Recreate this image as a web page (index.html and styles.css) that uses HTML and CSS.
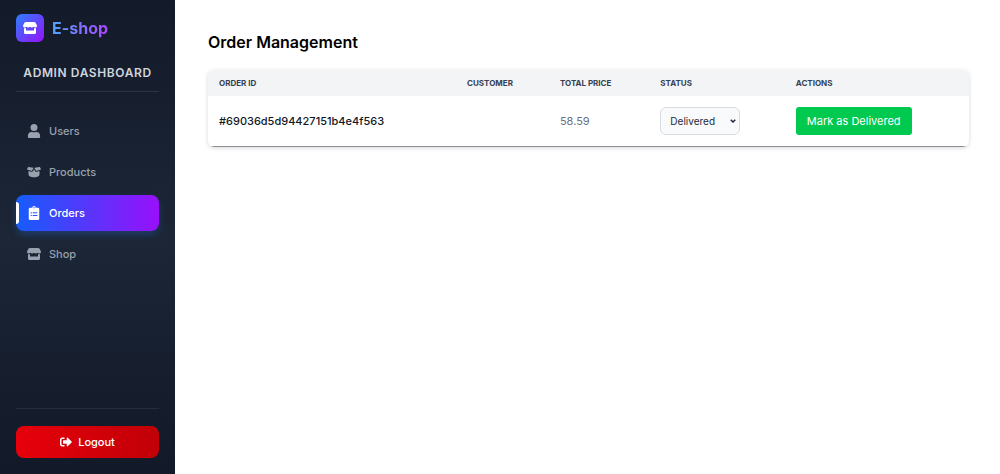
FILE: index.html
```html
<!DOCTYPE html>
<html lang="en">
<head>
<meta charset="utf-8">
<title>Order Management</title>
<link rel="stylesheet" href="styles.css">
</head>
<body>
<svg class="symbols" aria-hidden="true">
  <symbol id="shop" viewBox="0 0 28 24">
    <path d="M5.500 0h17c1 0 1.700.4 2.200 1.200L27.500 6c1.200 2.300-.1 5-2.700 5-1.500 0-2.600-.6-3.400-1.600-.8 1-2.100 1.600-3.700 1.600s-2.900-.6-3.700-1.600c-.8 1-2.100 1.600-3.700 1.600s-2.900-.6-3.700-1.600C5.800 10.400 4.700 11 3.200 11 .6 11-.7 8.300.5 6l2.800-4.800C3.800.4 4.500 0 5.500 0zM2 12.500c1.600.3 3 .2 4-.3V17h16v-4.800c1 .5 2.400.6 4 .3V21c0 1.700-1 3-2.700 3H4.700C3 24 2 22.700 2 21z"/>
  </symbol>
</svg>
<div class="layout">
  <aside class="sidebar">
    <div class="brand">
      <span class="brand-mark"><svg class="brand-icon" aria-hidden="true"><use href="#shop"/></svg></span>
      <span class="brand-name">E-shop</span>
    </div>
    <h2 class="sidebar-title">ADMIN DASHBOARD</h2>
    <nav class="nav">
      <a class="nav-link" href="#users">
        <svg class="nav-icon" viewBox="0 0 448 512" aria-hidden="true"><path d="M224 256a128 128 0 1 0 0-256 128 128 0 0 0 0 256zm90 32h-17c-44 21-102 21-146 0h-17C60 288 0 348 0 422v42c0 26 22 48 48 48h352c26 0 48-22 48-48v-42c0-74-60-134-134-134z"/></svg>
        Users
      </a>
      <a class="nav-link" href="#products">
        <svg class="nav-icon" viewBox="0 0 28 28" aria-hidden="true"><path d="M3 4l9.500 1.500c.5.100.6.500.4 1L10.200 11c-.4.700-1 .900-1.700.700L1 9.700c-.8-.2-1.100-.8-.8-1.500L2 4.600C2.200 4.100 2.500 3.900 3 4zM25 4l-9.500 1.500c-.5.100-.6.500-.4 1l2.700 4.500c.4.700 1 .900 1.700.700l7.500-2c.8-.2 1.100-.8.8-1.500L26 4.600c-.2-.5-.5-.7-1-.6zM14 8.500l2.300 3.800c.8 1.300 2 1.700 3.400 1.300l5.300-1.400V18c0 3.500-1.500 4.700-4 5.300l-5 1.300c-1.300.4-2.700.4-4 0l-5-1.300C4.500 22.700 3 21.500 3 18v-5.800l5.300 1.400c1.400.4 2.600 0 3.400-1.300z"/></svg>
        Products
      </a>
      <a class="nav-link nav-link-active" href="#orders" aria-current="page">
        <svg class="nav-icon" viewBox="0 0 384 512" aria-hidden="true"><path fill-rule="evenodd" d="M336 64h-80a64 64 0 0 0-128 0H48C22 64 0 86 0 112v352c0 26 22 48 48 48h288c26 0 48-22 48-48V112c0-26-22-48-48-48zM192 40a24 24 0 1 1 0 48 24 24 0 0 1 0-48zM72 232h40v40H72zm72 0h168v36H144zM72 328h40v40H72zm72 0h168v36H144z"/></svg>
        Orders
      </a>
      <a class="nav-link" href="#shop-page">
        <svg class="nav-icon" aria-hidden="true"><use href="#shop"/></svg>
        Shop
      </a>
    </nav>
    <div class="sidebar-footer">
      <button class="logout" type="button">
        <svg class="logout-icon" viewBox="0 0 512 512" aria-hidden="true"><path d="M497 273L329 441c-15 15-41 4.500-41-17v-96H152c-13.300 0-24-10.700-24-24v-96c0-13.300 10.700-24 24-24h136V88c0-21.400 25.900-32 41-17l168 168c9.300 9.400 9.300 24.600 0 34zM192 436v-40c0-6.600-5.400-12-12-12H96c-17.700 0-32-14.300-32-32V160c0-17.700 14.300-32 32-32h84c6.600 0 12-5.400 12-12V76c0-6.600-5.400-12-12-12H96c-53 0-96 43-96 96v192c0 53 43 96 96 96h84c6.600 0 12-5.400 12-12z"/></svg>
        Logout
      </button>
    </div>
  </aside>
  <main class="main">
    <h1 class="page-title">Order Management</h1>
    <div class="card">
      <table class="orders">
        <colgroup><col class="col-id"><col class="col-customer"><col class="col-price"><col class="col-status"><col></colgroup>
        <thead>
          <tr><th scope="col">ORDER ID</th><th scope="col">CUSTOMER</th><th scope="col">TOTAL PRICE</th><th scope="col">STATUS</th><th scope="col">ACTIONS</th></tr>
        </thead>
        <tbody>
          <tr>
            <td class="order-id">#69036d5d94427151b4e4f563</td>
            <td></td>
            <td>58.59</td>
            <td>
              <div class="status-field">
                <select class="status" aria-label="Status"><option>Delivered</option></select>
                <svg class="status-arrow" viewBox="0 0 12 8" aria-hidden="true"><path d="M1.500 1.500L6 6l4.500-4.500"/></svg>
              </div>
            </td>
            <td><button class="deliver" type="button">Mark as Delivered</button></td>
          </tr>
        </tbody>
      </table>
    </div>
  </main>
</div>
</body>
</html>
```
FILE: styles.css
```css
* { box-sizing: border-box; }
body {
  margin: 0;
  background: #fff;
  color: #000;
  font-family: Inter, "Liberation Sans", sans-serif;
  font-size: 11px;
  line-height: 16px;
}
button, select { font-family: inherit; font-size: inherit; line-height: inherit; }
svg { fill: currentColor; }
.symbols { display: none; }
.layout { display: flex; min-height: 100vh; }

.sidebar {
  display: flex;
  flex-direction: column;
  flex: 0 0 175px;
  padding: 14px 16px 16px;
  background: linear-gradient(180deg, #131a2a, #1c2636 50%, #121929);
}
.brand { display: flex; align-items: center; gap: 8px; }
.brand-mark {
  display: grid;
  place-items: center;
  width: 28px;
  height: 28px;
  border-radius: 6px;
  background: linear-gradient(135deg, #2b7fff, #9810fa);
  color: #fff;
}
.brand-icon { width: 14px; height: 12px; }
.brand-name {
  background: linear-gradient(90deg, #51a2ff, #ad46ff);
  background-clip: text;
  color: transparent;
  font-size: 16px;
  font-weight: 700;
  line-height: 24px;
}
.sidebar-title {
  margin: 22px 0 0;
  padding-bottom: 10px;
  border-bottom: 1px solid #2a3546;
  color: #d1d5dc;
  font-size: 12px;
  font-weight: 600;
  letter-spacing: 0.05em;
  line-height: 17px;
  text-align: center;
}
.nav { display: flex; flex-direction: column; gap: 5px; padding-top: 21px; }
.nav-link {
  position: relative;
  display: flex;
  align-items: center;
  gap: 8px;
  padding: 10px 11px;
  border-radius: 8px;
  color: #99a1af;
  font-weight: 500;
  text-decoration: none;
}
.nav-icon { width: 14px; height: 14px; }
.nav-link-active {
  background: linear-gradient(90deg, #155dfc, #9810fa);
  box-shadow: 0 4px 8px -1px rgba(43, 127, 255, 0.3);
  color: #fff;
}
.nav-link-active::before {
  content: "";
  position: absolute;
  top: 7px;
  bottom: 7px;
  left: 0;
  width: 3px;
  border-radius: 0 3px 3px 0;
  background: #fff;
}
.sidebar-footer { margin-top: auto; padding-top: 17px; border-top: 1px solid #222d3d; }
.logout {
  display: flex;
  align-items: center;
  justify-content: center;
  gap: 6px;
  width: 100%;
  padding: 8px 11px;
  border: 0;
  border-radius: 8px;
  background: linear-gradient(90deg, #e7000b, #c10007);
  color: #fff;
  font-weight: 500;
}
.logout-icon { width: 12px; height: 12px; }

.main { flex: 1; min-width: 0; padding: 32px 31px 32px 33px; }
.page-title { margin: 0 0 18px; font-size: 16px; font-weight: 600; line-height: 20px; }
.card {
  overflow: hidden;
  border-radius: 6px;
  background: #fff;
  box-shadow: 0 1px 4px rgba(0, 0, 0, 0.16);
}
.orders { width: 100%; border-collapse: collapse; table-layout: fixed; text-align: left; }
.col-id { width: 32.6%; }
.col-customer { width: 12.2%; }
.col-price { width: 13.2%; }
.col-status { width: 17.8%; }
.orders th {
  padding: 5px 11px;
  background: #f3f4f6;
  color: #364153;
  font-size: 8px;
  font-weight: 700;
}
.orders tbody tr { border-bottom: 1px solid #8b8f96; }
.orders td { padding: 11px; color: #6a7282; }
.orders .order-id { color: #101828; font-weight: 500; }
.status-field { position: relative; width: 80px; }
.status {
  appearance: none;
  display: block;
  width: 100%;
  height: 28px;
  padding: 0 9px;
  border: 1px solid #d9dce1;
  border-radius: 6px;
  background: #f9fafb;
  color: #1e2939;
  font-size: 10px;
}
.status-arrow {
  position: absolute;
  top: 12px;
  right: 4px;
  width: 6px;
  height: 4px;
  fill: none;
  stroke: #1e2939;
  stroke-width: 3;
  pointer-events: none;
}
.deliver {
  display: block;
  padding: 6px 11px;
  border: 0;
  border-radius: 3px;
  background: #00c950;
  color: #fff;
}
```
